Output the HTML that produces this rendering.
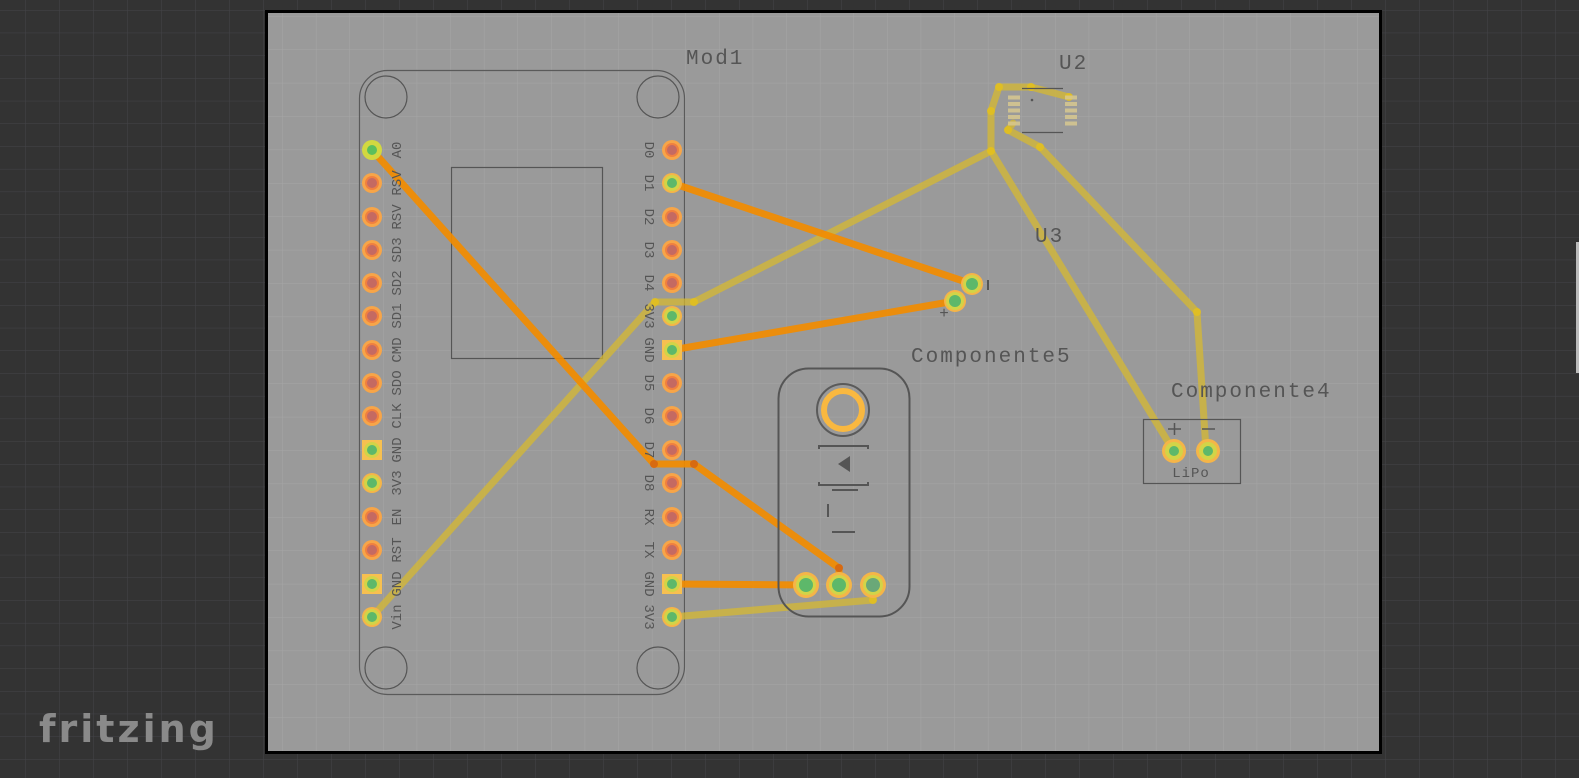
<!DOCTYPE html>
<html><head><meta charset="utf-8"><style>
html,body{margin:0;padding:0;background:#333;overflow:hidden;width:1579px;height:778px}
svg{display:block;position:fixed;left:0;top:0}
.t{font-family:"Liberation Mono","DejaVu Sans Mono",monospace;fill:#555}
.logo{font-family:"DejaVu Sans","Liberation Sans",sans-serif;fill:#8a8a8a;font-weight:bold}
</style></head><body>
<svg width="1579" height="778" viewBox="0 0 1579 778" xmlns="http://www.w3.org/2000/svg">
<defs>
<pattern id="g1" x="25" y="10" width="34" height="22.7" patternUnits="userSpaceOnUse">
<path d="M0 0V22.7M0 0H34" stroke="#444448" stroke-width="1" fill="none"/>
</pattern>
<pattern id="g2" x="13.5" y="16" width="33.6" height="33.4" patternUnits="userSpaceOnUse">
<path d="M0 0V33.4M0 0H33.6" stroke="#a6a6a6" stroke-width="1" fill="none"/>
</pattern>
</defs>
<rect width="1579" height="778" fill="#333"/>
<rect width="1579" height="778" fill="url(#g1)"/>
<rect x="1576" y="242" width="3" height="131" fill="#bbb"/>
<rect x="266.5" y="11.5" width="1114" height="741" fill="#9a9a9a" stroke="#000" stroke-width="3"/>
<rect x="268" y="13" width="1111" height="738" fill="url(#g2)"/>

<rect x="359.5" y="70.5" width="325" height="624" rx="28" fill="none" stroke="#5a5a5a" stroke-width="1.2"/>
<g fill="none" stroke="#555" stroke-width="1.2">
<circle cx="386" cy="97" r="21"/><circle cx="658" cy="97" r="21"/>
<circle cx="386" cy="668" r="21"/><circle cx="658" cy="668" r="21"/>
<rect x="451.5" y="167.5" width="151" height="191"/>
</g>

<g fill="none" stroke="#d6b830" stroke-opacity="0.75" stroke-width="7" stroke-linecap="round" stroke-linejoin="round">
<polyline points="372,617 655,302 694,302 991,151 991,111 999,87 1031,87 1069,97"/>
<polyline points="991,151 1173,450"/>
<polyline points="1013,123 1008,130 1040,147 1197,312 1206,450"/>
<polyline points="672,617 873,600 873,585"/>
</g>
<g fill="#e6c21a" opacity="0.8">
<circle cx="999" cy="87" r="4"/><circle cx="1031" cy="87" r="4"/><circle cx="991" cy="111" r="4"/><circle cx="991" cy="151" r="4"/>
<circle cx="1008" cy="130" r="4"/><circle cx="1040" cy="147" r="4"/><circle cx="1197" cy="312" r="4"/><circle cx="655" cy="302" r="4"/><circle cx="694" cy="302" r="4"/><circle cx="873" cy="600" r="4"/><circle cx="1069" cy="97" r="4"/>
</g>

<g fill="#d8c890" opacity="0.85">
<rect x="1008" y="95.5" width="12" height="4"/><rect x="1008" y="102" width="12" height="4"/><rect x="1008" y="108.5" width="12" height="4"/><rect x="1008" y="115" width="12" height="4"/><rect x="1008" y="121.5" width="12" height="4"/>
<rect x="1065" y="95.5" width="12" height="4"/><rect x="1065" y="102" width="12" height="4"/><rect x="1065" y="108.5" width="12" height="4"/><rect x="1065" y="115" width="12" height="4"/><rect x="1065" y="121.5" width="12" height="4"/>
</g>
<path d="M1022 88.5H1063M1022 132.5H1063" stroke="#555" stroke-width="1.2"/>
<circle cx="1032" cy="100" r="1.3" fill="#555"/>

<g fill="none" stroke="#f28c00" stroke-opacity="0.92" stroke-width="7" stroke-linecap="round" stroke-linejoin="round">
<polyline points="372,150 654,464 694,464 839,568 839,585"/>
<polyline points="672,183 972,284"/>
<polyline points="672,350 955,301"/>
<polyline points="672,584 806,585"/>
</g>
<g fill="#d86a10"><circle cx="654" cy="464" r="4"/><circle cx="694" cy="464" r="4"/><circle cx="839" cy="568" r="4"/></g>

<g fill="#f7a548"><circle cx="372" cy="183" r="10"/><circle cx="372" cy="217" r="10"/><circle cx="372" cy="250" r="10"/><circle cx="372" cy="283" r="10"/><circle cx="372" cy="316" r="10"/><circle cx="372" cy="350" r="10"/><circle cx="372" cy="383" r="10"/><circle cx="372" cy="416" r="10"/><circle cx="372" cy="517" r="10"/><circle cx="372" cy="550" r="10"/>
<circle cx="672" cy="150" r="10"/><circle cx="672" cy="217" r="10"/><circle cx="672" cy="250" r="10"/><circle cx="672" cy="283" r="10"/><circle cx="672" cy="383" r="10"/><circle cx="672" cy="416" r="10"/><circle cx="672" cy="450" r="10"/><circle cx="672" cy="483" r="10"/><circle cx="672" cy="517" r="10"/><circle cx="672" cy="550" r="10"/></g>
<g fill="#f08040"><circle cx="372" cy="183" r="7"/><circle cx="372" cy="217" r="7"/><circle cx="372" cy="250" r="7"/><circle cx="372" cy="283" r="7"/><circle cx="372" cy="316" r="7"/><circle cx="372" cy="350" r="7"/><circle cx="372" cy="383" r="7"/><circle cx="372" cy="416" r="7"/><circle cx="372" cy="517" r="7"/><circle cx="372" cy="550" r="7"/>
<circle cx="672" cy="150" r="7"/><circle cx="672" cy="217" r="7"/><circle cx="672" cy="250" r="7"/><circle cx="672" cy="283" r="7"/><circle cx="672" cy="383" r="7"/><circle cx="672" cy="416" r="7"/><circle cx="672" cy="450" r="7"/><circle cx="672" cy="483" r="7"/><circle cx="672" cy="517" r="7"/><circle cx="672" cy="550" r="7"/></g>
<g fill="#c46a62"><circle cx="372" cy="183" r="5"/><circle cx="372" cy="217" r="5"/><circle cx="372" cy="250" r="5"/><circle cx="372" cy="283" r="5"/><circle cx="372" cy="316" r="5"/><circle cx="372" cy="350" r="5"/><circle cx="372" cy="383" r="5"/><circle cx="372" cy="416" r="5"/><circle cx="372" cy="517" r="5"/><circle cx="372" cy="550" r="5"/>
<circle cx="672" cy="150" r="5"/><circle cx="672" cy="217" r="5"/><circle cx="672" cy="250" r="5"/><circle cx="672" cy="283" r="5"/><circle cx="672" cy="383" r="5"/><circle cx="672" cy="416" r="5"/><circle cx="672" cy="450" r="5"/><circle cx="672" cy="483" r="5"/><circle cx="672" cy="517" r="5"/><circle cx="672" cy="550" r="5"/></g>
<g fill="#f7c050"><rect x="362" y="440" width="20" height="20"/><rect x="362" y="574" width="20" height="20"/><rect x="662" y="340" width="20" height="20"/><rect x="662" y="574" width="20" height="20"/></g>
<g fill="#f5b548"><circle cx="372" cy="483" r="10"/><circle cx="372" cy="617" r="10"/><circle cx="672" cy="183" r="10"/><circle cx="672" cy="316" r="10"/><circle cx="672" cy="617" r="10"/>
<circle cx="972" cy="284" r="11"/><circle cx="955" cy="301" r="11"/><circle cx="806" cy="585" r="13"/><circle cx="839" cy="585" r="13"/><circle cx="873" cy="585" r="13"/><circle cx="1174" cy="451" r="12"/><circle cx="1208" cy="451" r="12"/></g>
<g fill="#d2d448"><circle cx="372" cy="450" r="8"/><circle cx="372" cy="584" r="8"/><circle cx="672" cy="350" r="8"/><circle cx="672" cy="584" r="8"/><circle cx="372" cy="483" r="8"/><circle cx="372" cy="617" r="8"/><circle cx="672" cy="183" r="8"/><circle cx="672" cy="316" r="8"/><circle cx="672" cy="617" r="8"/>
<circle cx="972" cy="284" r="9"/><circle cx="955" cy="301" r="9"/><circle cx="806" cy="585" r="10"/><circle cx="839" cy="585" r="10"/><circle cx="873" cy="585" r="10"/><circle cx="1174" cy="451" r="9"/><circle cx="1208" cy="451" r="9"/></g>
<g fill="#5db86a"><circle cx="372" cy="450" r="5"/><circle cx="372" cy="584" r="5"/><circle cx="672" cy="350" r="5"/><circle cx="672" cy="584" r="5"/><circle cx="372" cy="483" r="5"/><circle cx="372" cy="617" r="5"/><circle cx="672" cy="183" r="5"/><circle cx="672" cy="316" r="5"/><circle cx="672" cy="617" r="5"/>
<circle cx="972" cy="284" r="6"/><circle cx="955" cy="301" r="6"/><circle cx="806" cy="585" r="7"/><circle cx="839" cy="585" r="7"/><circle cx="873" cy="585" r="7" fill="#6aa878"/><circle cx="1174" cy="451" r="5"/><circle cx="1208" cy="451" r="5"/></g>
<circle cx="372" cy="150" r="10" fill="#d2d840"/><circle cx="372" cy="150" r="5" fill="#5cbf5c"/>

<g class="t" font-size="14" text-anchor="middle">
<text transform="translate(401,150) rotate(-90)">A0</text>
<text transform="translate(401,183) rotate(-90)">RSV</text>
<text transform="translate(401,217) rotate(-90)">RSV</text>
<text transform="translate(401,250) rotate(-90)">SD3</text>
<text transform="translate(401,283) rotate(-90)">SD2</text>
<text transform="translate(401,316) rotate(-90)">SD1</text>
<text transform="translate(401,350) rotate(-90)">CMD</text>
<text transform="translate(401,383) rotate(-90)">SDO</text>
<text transform="translate(401,416) rotate(-90)">CLK</text>
<text transform="translate(401,450) rotate(-90)">GND</text>
<text transform="translate(401,483) rotate(-90)">3V3</text>
<text transform="translate(401,517) rotate(-90)">EN</text>
<text transform="translate(401,550) rotate(-90)">RST</text>
<text transform="translate(401,584) rotate(-90)">GND</text>
<text transform="translate(401,617) rotate(-90)">Vin</text>
<text transform="translate(645,150) rotate(90)">D0</text>
<text transform="translate(645,183) rotate(90)">D1</text>
<text transform="translate(645,217) rotate(90)">D2</text>
<text transform="translate(645,250) rotate(90)">D3</text>
<text transform="translate(645,283) rotate(90)">D4</text>
<text transform="translate(645,316) rotate(90)">3V3</text>
<text transform="translate(645,350) rotate(90)">GND</text>
<text transform="translate(645,383) rotate(90)">D5</text>
<text transform="translate(645,416) rotate(90)">D6</text>
<text transform="translate(645,450) rotate(90)">D7</text>
<text transform="translate(645,483) rotate(90)">D8</text>
<text transform="translate(645,517) rotate(90)">RX</text>
<text transform="translate(645,550) rotate(90)">TX</text>
<text transform="translate(645,584) rotate(90)">GND</text>
<text transform="translate(645,617) rotate(90)">3V3</text>
</g>

<rect x="778.5" y="368.5" width="131" height="248" rx="30" fill="none" stroke="#555" stroke-width="2"/>
<circle cx="843" cy="410" r="26" fill="none" stroke="#5a5a5a" stroke-width="2"/>
<circle cx="843" cy="410" r="19" fill="none" stroke="#f9b840" stroke-width="6"/>
<g stroke="#555" stroke-width="2" fill="none">
<path d="M819 449V446H868V449M819 482V485H868V482M832 490H858M828 504V517M832 532H855"/>
</g>
<path d="M838 464L850 456V472Z" fill="#555"/>

<path d="M988 280V290" stroke="#555" stroke-width="2"/>
<text class="t" x="944" y="318" font-size="16" text-anchor="middle">+</text>

<rect x="1143.5" y="419.5" width="97" height="64" fill="none" stroke="#555" stroke-width="1.2"/>
<path d="M1168 429H1181M1174.5 423V435M1202 429H1215" stroke="#555" stroke-width="1.5"/>
<text class="t" x="1191" y="477" font-size="14" text-anchor="middle" letter-spacing="1">LiPo</text>

<g class="t" font-size="21" letter-spacing="2">
<text x="686" y="64">Mod1</text>
<text x="1059" y="69">U2</text>
<text x="1035" y="242">U3</text>
<text x="911" y="362">Componente5</text>
<text x="1171" y="397">Componente4</text>
</g>

<text class="logo" x="39" y="742" font-size="38" letter-spacing="3">fritzing</text>
</svg>
</body></html>
